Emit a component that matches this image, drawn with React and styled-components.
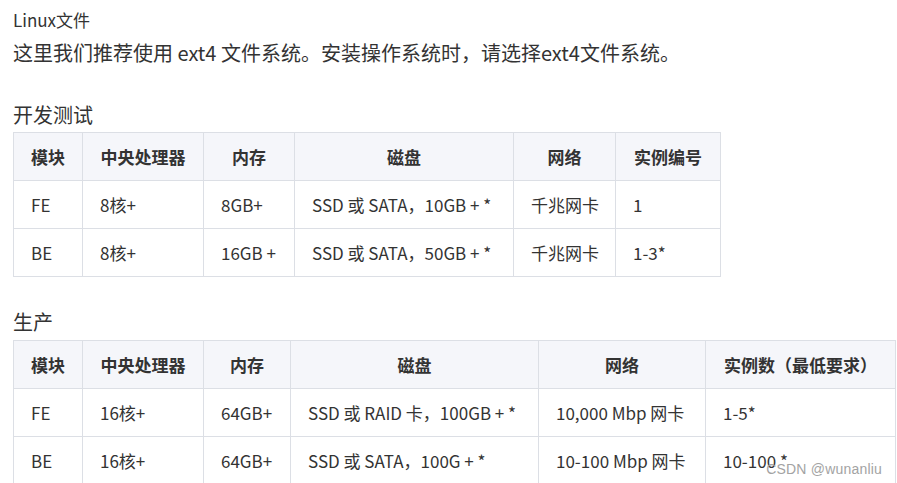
import React from 'react'
import styled, { createGlobalStyle } from 'styled-components'

const GlobalStyle = createGlobalStyle`
  html, body {
    margin: 0;
    padding: 0;
    background: #fff;
    overflow: hidden;
  }
  body {
    font-family: "Noto Sans CJK SC", "Noto Sans", sans-serif;
    color: #333;
  }
`

const Page = styled.div`
  position: relative;
  width: 897px;
  height: 483px;
  padding-left: 13px;
  box-sizing: border-box;
`

const Caption = styled.div`
  padding-top: 7px;
  font-size: 17px;
  line-height: 26px;
`

const Lead = styled.p`
  margin: 4px 0 0;
  font-size: 20px;
  line-height: 32px;
`

const Heading = styled.h3`
  margin: ${p => p.$top}px 0 ${p => p.$bottom}px;
  font-size: 20px;
  font-weight: 400;
  line-height: 32px;
`

const Table = styled.table`
  width: ${p => p.$width}px;
  table-layout: fixed;
  border-collapse: collapse;
  font-size: 17px;
  color: #333;
`

const Th = styled.th`
  height: 48px;
  padding: 0 17px;
  background: #f5f6fa;
  border: 1px solid #dcdfe5;
  font-weight: 700;
  text-align: center;
  white-space: nowrap;
  box-sizing: border-box;
`

const Td = styled.td`
  height: 48px;
  padding: 0 17px;
  border: 1px solid #dcdfe5;
  text-align: left;
  white-space: nowrap;
  box-sizing: border-box;
`

const Watermark = styled.div`
  position: absolute;
  right: 15px;
  bottom: 6px;
  font-family: "Liberation Sans", Arial, sans-serif;
  font-size: 14px;
  color: #a3a3a3;
  letter-spacing: 0.2px;
`

const devTable = {
  widths: [69, 121, 91, 219, 102, 105],
  head: ['模块', '中央处理器', '内存', '磁盘', '网络', '实例编号'],
  rows: [
    ['FE', '8核+', '8GB+', 'SSD 或 SATA，10GB + *', '千兆网卡', '1'],
    ['BE', '8核+', '16GB +', 'SSD 或 SATA，50GB + *', '千兆网卡', '1-3*'],
  ],
}

const prodTable = {
  widths: [69, 121, 87, 248, 167, 190],
  head: ['模块', '中央处理器', '内存', '磁盘', '网络', '实例数（最低要求）'],
  rows: [
    ['FE', '16核+', '64GB+', 'SSD 或 RAID 卡，100GB + *', '10,000 Mbp 网卡', '1-5*'],
    ['BE', '16核+', '64GB+', 'SSD 或 SATA，100G + *', '10-100 Mbp 网卡', '10-100 *'],
  ],
}

function SpecTable({ data }) {
  const total = data.widths.reduce((a, b) => a + b, 0)
  return (
    <Table $width={total}>
      <colgroup>
        {data.widths.map((w, i) => <col key={i} style={{ width: w }} />)}
      </colgroup>
      <thead>
        <tr>
          {data.head.map(h => <Th key={h}>{h}</Th>)}
        </tr>
      </thead>
      <tbody>
        {data.rows.map(row => (
          <tr key={row[0]}>
            {row.map((c, i) => <Td key={i}>{c}</Td>)}
          </tr>
        ))}
      </tbody>
    </Table>
  )
}

export default function App() {
  return (
    <Page>
      <GlobalStyle />
      <Caption>Linux文件</Caption>
      <Lead>这里我们推荐使用 ext4 文件系统。安装操作系统时，请选择ext4文件系统。</Lead>
      <Heading $top={30} $bottom={1}>开发测试</Heading>
      <SpecTable data={devTable} />
      <Heading $top={29} $bottom={2}>生产</Heading>
      <SpecTable data={prodTable} />
      <Watermark>CSDN @wunanliu</Watermark>
    </Page>
  )
}
